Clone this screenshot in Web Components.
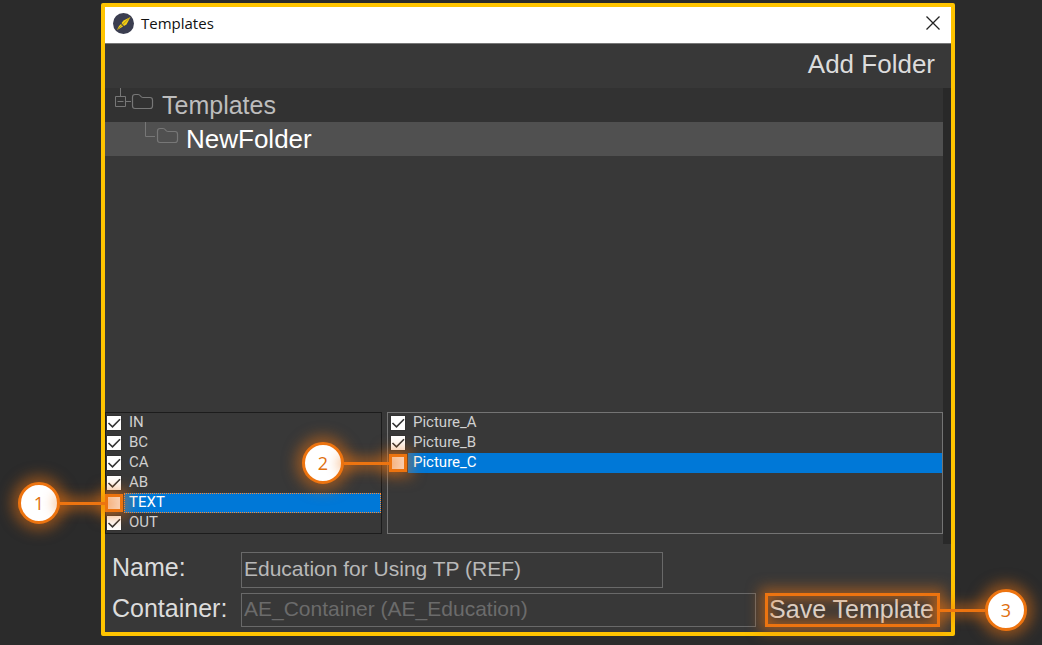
<!DOCTYPE html>
<html lang="en">
<head>
<meta charset="utf-8">
<title>Templates</title>
<style>
  body { margin: 0; background: #2b2b2b; font-family: "Liberation Sans", Arial, sans-serif; color: #dcdcdc; }
</style>
</head>
<body>
<template-dialog></template-dialog>

<script>
class BaseElement extends HTMLElement {
  constructor() {
    super();
    this.attachShadow({ mode: "open" });
  }
  connectedCallback() {
    this.shadowRoot.innerHTML = "<style>*{box-sizing:border-box}</style>" + this.render();
  }
}

/* Numbered marker: frames its parent and leads a line out to a number. */
customElements.define("step-mark", class extends BaseElement {
  render() {
    return `
<style>
  :host { position: absolute; inset: -1px; z-index: 2; box-sizing: border-box; border: 3px solid #ed7410;
    background: #f0792855; box-shadow: 0 0 14px 5px #ed741080; pointer-events: none; }
  :host([side="right"]) { inset: 0; background: #ed741012; box-shadow: 0 0 14px 5px #ed741080, inset 0 0 12px 3px #ed741080; }
  .lead { position: absolute; right: 100%; top: 50%; transform: translateY(-50%); display: flex; align-items: center; }
  :host([side="right"]) .lead { right: auto; left: 100%; flex-direction: row-reverse; }
  .line { width: 48px; height: 3px; background: #ed7410; box-shadow: 0 0 12px 6px #ed741070; }
  .num { width: 42px; height: 42px; border: 3px solid #ed7410; border-radius: 50%; background: #fff; color: #e0700f;
    display: grid; place-items: center; font: 18px/20px "Open Sans", sans-serif; box-shadow: 0 0 14px 6px #ed741080; }
</style>
<div class="lead"><span class="num">${this.getAttribute("step")}</span><span class="line"></span></div>`;
  }
});

customElements.define("title-bar", class extends BaseElement {
  render() {
    return `
<style>
  :host { display: flex; align-items: center; height: 37px; padding: 0 8px 4px; background: #fff; color: #111; border-bottom: 1px solid #777; box-sizing: border-box; }
  h1 { flex: 1; margin: 0 0 0 7px; font: 15px/20px "Open Sans", sans-serif; }
  button { border: 0; background: none; padding: 2px; display: block; }
  svg { display: block; }
</style>
<svg width="21" height="21" viewBox="0 0 21 21" aria-hidden="true">
  <circle cx="10.500" cy="10.500" r="10.500" fill="#3b3e50"/>
  <path d="M17.500 4L13.500 11.500 11 13 8.500 10 10.500 7.500Z M8 11l2 2.500-2.500 1.500L4 17l2-4z" fill="#f5ce14"/>
  <path d="M4 17L17 4.500" stroke="#8d7d22" stroke-width=".7"/>
</svg>
<h1><slot></slot></h1>
<button aria-label="Close"><svg width="16" height="16" viewBox="0 0 16 16"><path d="M1.500 1.500l13 13M14.500 1.500l-13 13" stroke="#222" stroke-width="1.300"/></svg></button>`;
  }
});

customElements.define("tree-row", class extends BaseElement {
  render() {
    const child = this.hasAttribute("child");
    const x = child ? 52 : 27;
    const lines = child
      ? `<path d="M40.500 0V14.500H50"/>`
      : `<path d="M15.500 0V9M10.500 8.500h10v10h-10zM12.500 13.500h6M21 13.500h5"/>`;
    return `
<style>
  :host { display: flex; height: 34px; line-height: 34px; font-size: 25px; background: #323232; color: #bdbdbd; }
  :host([selected]) { background: #505050; color: #fff; font-size: 26px; }
  svg { flex: none; }
</style>
<svg width="${child ? 81 : 57}" height="34" fill="none" stroke="#777" aria-hidden="true">${lines}
  <path transform="translate(${x} 6)" stroke-width="1.200" d="M.5 3Q.5.5 3 .5H6Q7.500.5 8.500 2T11 3.500H18Q20.500 3.500 20.500 6V12Q20.500 14.500 18 14.500H3Q.5 14.500.5 12Z"/>
</svg>
<slot></slot>`;
  }
});

customElements.define("check-row", class extends BaseElement {
  render() {
    return `
<style>
  :host { display: block; height: 20px; color: #d0d0d0; font: 15px/16px Roboto, sans-serif; }
  label { display: flex; gap: 2px; height: 20px; }
  .cell { position: relative; flex: none; width: 16px; height: 16px; margin-top: 2px; }
  input { appearance: none; display: block; margin: 0; width: 16px; height: 16px; background: #fff; border: 1px solid #333; }
  svg { position: absolute; inset: 0; display: none; pointer-events: none; }
  input:checked + svg { display: block; }
  .text { flex: 1; padding-left: 4px; border: 1px solid transparent; }
  :host([selected]) .text { background: #0078d7; color: #fff; }
  :host([focused]) .text { border: 1px dotted #ff8a30; }
</style>
<label><span class="cell"><input type="checkbox" ${this.hasAttribute("checked") ? "checked" : ""}><svg width="16" height="16" fill="none" stroke="#333" stroke-width="1.600" aria-hidden="true"><path d="M2.500 8L6.500 11.800 14 4.300"/></svg><slot name="mark"></slot></span><span class="text"><slot></slot></span></label>`;
  }
});

customElements.define("check-list", class extends BaseElement {
  render() {
    return `
<style>
  :host { display: block; min-height: 122px; box-sizing: border-box; border: 1px solid #1c1c1c; background: #383838; }
  :host([active]) { border-color: #747474; padding-left: 2px; }
</style>
<slot></slot>`;
  }
});

customElements.define("save-form", class extends BaseElement {
  render() {
    return `
<style>
  :host { display: block; padding: 8px 11px 5px 7px; font-size: 25px; }
  form { display: grid; grid-template-columns: 129px 1fr auto; row-gap: 5px; margin: 0; }
  label { line-height: 30px; }
  input { box-sizing: border-box; width: 100%; min-width: 0; height: 34px; margin: 0; padding: 0 2px 2px; border: 1px solid #696969; border-radius: 0;
    background: #383838; color: #b8b8b8; font: 21px "Liberation Sans", Arial, sans-serif; }
  #name { width: 82%; height: 36px; padding-bottom: 3px; }
  #container { color: #6b6b6b; }
  .action { position: relative; grid-column: 3; margin-left: 9px; }
  button { height: 34px; padding: 0 6px 3px 4px; border: 0; background: none; color: #dcdcdc; font: 25px/30px "Liberation Sans", Arial, sans-serif; display: block; white-space: nowrap; }
</style>
<form>
  <label for="name">Name:</label><input id="name" value="Education for Using TP (REF)"><span></span>
  <label for="container">Container:</label><input id="container" value="AE_Container (AE_Education)" readonly>
  <div class="action"><button type="button">Save Template</button><step-mark step="3" side="right"></step-mark></div>
</form>`;
  }
});

customElements.define("template-dialog", class extends BaseElement {
  render() {
    return `
<style>
  :host { display: flex; flex-direction: column; box-sizing: border-box; min-height: 100vh; padding: 3px 87px 9px 101px; }
  .window { flex: 1; display: flex; flex-direction: column; border: 4px solid #ffc400; border-radius: 2px; background: #383838; }
  .tools { display: flex; justify-content: flex-end; height: 44px; padding: 0 16px 3px; }
  .tools button { border: 0; padding: 0; background: none; color: #dcdcdc; font: 26px "Liberation Sans", Arial, sans-serif; }
  .body { flex: 1; display: flex; flex-direction: column; border-right: 8px solid #292929; padding-bottom: 10px; }
  .tree { flex: 1; min-height: 120px; }
  .lists { display: grid; grid-template-columns: 277px 1fr; gap: 5px; }
</style>
<main class="window">
  <title-bar>Templates</title-bar>
  <div class="tools"><button>Add Folder</button></div>
  <div class="body">
    <div class="tree"><tree-row>Templates</tree-row><tree-row child selected>NewFolder</tree-row></div>
    <div class="lists">
      <check-list>
        <check-row checked>IN</check-row>
        <check-row checked>BC</check-row>
        <check-row checked>CA</check-row>
        <check-row checked>AB</check-row>
        <check-row selected focused>TEXT<step-mark slot="mark" step="1"></step-mark></check-row>
        <check-row checked>OUT</check-row>
      </check-list>
      <check-list active>
        <check-row checked>Picture_A</check-row>
        <check-row checked>Picture_B</check-row>
        <check-row selected>Picture_C<step-mark slot="mark" step="2"></step-mark></check-row>
      </check-list>
    </div>
  </div>
  <save-form></save-form>
</main>`;
  }
});
</script>
</body>
</html>
